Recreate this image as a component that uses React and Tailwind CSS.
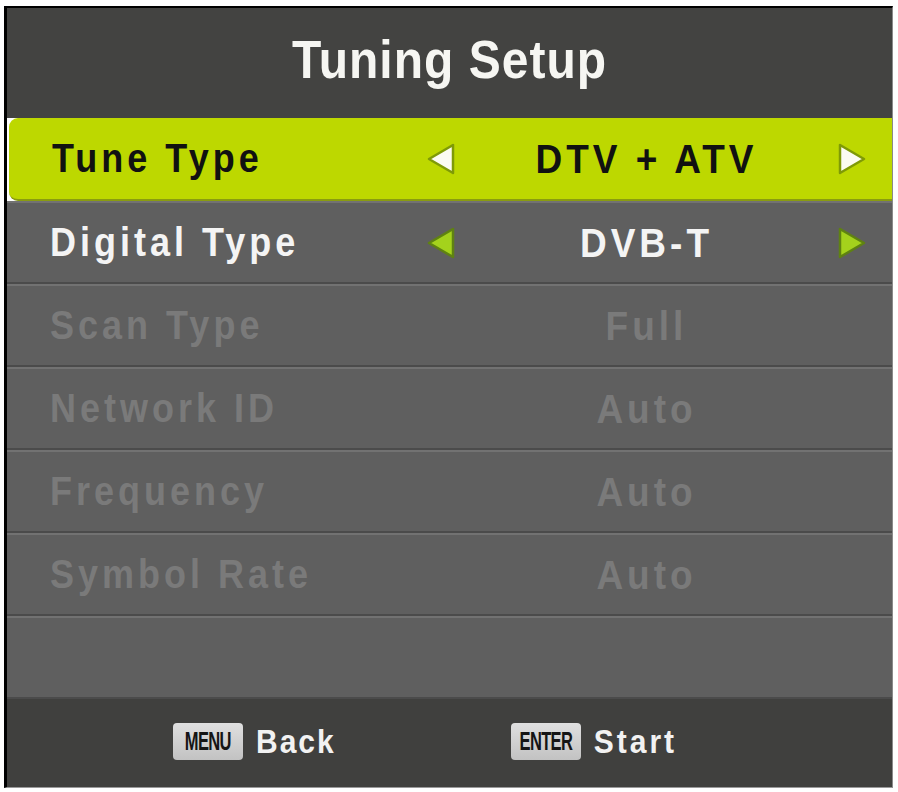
import React from 'react'

const font = { fontFamily: '"Liberation Sans", Arial, sans-serif' }

const rows = [
  { label: 'Tune Type', value: 'DTV + ATV', state: 'selected' },
  { label: 'Digital Type', value: 'DVB-T', state: 'active' },
  { label: 'Scan Type', value: 'Full', state: 'disabled' },
  { label: 'Network ID', value: 'Auto', state: 'disabled' },
  { label: 'Frequency', value: 'Auto', state: 'disabled' },
  { label: 'Symbol Rate', value: 'Auto', state: 'disabled' },
]

function Arrow({ dir, variant }) {
  const pts = dir === 'left' ? '2,16 26,2 26,30' : '26,16 2,2 2,30'
  const fill = variant === 'selected' ? '#fbfbf2' : '#a4d21c'
  const stroke = variant === 'selected' ? '#7f9a06' : '#5f8212'
  return (
    <svg width="28" height="32" viewBox="0 0 28 32" className="shrink-0">
      <polygon points={pts} fill={fill} stroke={stroke} strokeWidth="2.5" strokeLinejoin="round" />
    </svg>
  )
}

function Row({ label, value, state }) {
  const selected = state === 'selected'
  const disabled = state === 'disabled'
  const text = selected ? 'text-[#111]' : disabled ? 'text-[#7a7a7a]' : 'text-[#f4f4f4]'
  const bg = selected
    ? 'ml-[2px] bg-[#bdd800] rounded-l-[9px] border-b-2 border-b-[#8a9c10]'
    : 'bg-[#5f5f5f] border-t-2 border-t-[#727272] border-b-2 border-b-[#4b4b4b]'

  return (
    <div className={`flex items-center h-[83px] font-bold ${bg} ${text}`}>
      <div className={`${selected ? 'w-[418px]' : 'w-[420px]'} pl-[43px] text-[36px] tracking-[4px] leading-none`}>
        <span className="inline-block scale-y-[1.12]">{label}</span>
      </div>
      <div className="w-[28px] flex justify-center">
        {!disabled && <Arrow dir="left" variant={state} />}
      </div>
      <div className="flex-1 text-center text-[37px] tracking-[4px] leading-none">
        <span className="inline-block scale-y-[1.12]">{value}</span>
      </div>
      <div className="w-[28px] flex justify-center">
        {!disabled && <Arrow dir="right" variant={state} />}
      </div>
      <div className="w-[26px]" />
    </div>
  )
}

function KeyBadge({ children }) {
  return (
    <div className="w-[70px] h-[37px] rounded-[4px] bg-gradient-to-b from-[#e0e0e0] to-[#c2c2c2] flex items-center justify-center overflow-hidden">
      <span className="inline-block scale-x-[0.66] text-[25px] font-bold text-[#151515] tracking-[-1px] leading-none">
        {children}
      </span>
    </div>
  )
}

export default function App() {
  return (
    <div className="w-[898px] h-[792px] bg-white pt-[6px] pl-[4px]" style={font}>
      <div className="w-[889px] h-[782px] flex flex-col border-l-[3px] border-t-2 border-black border-r border-r-[#8a8a8a] border-b border-b-[#9a9a9a] overflow-hidden">
        {/* Title */}
        <div className="h-[110px] shrink-0 bg-[#434341] flex items-center justify-center pb-[6px]">
          <h1 className="text-[48px] font-bold text-[#f6f6f2] tracking-[1px] leading-none scale-y-[1.1]">Tuning Setup</h1>
        </div>

        {/* Settings list */}
        {rows.map((r) => (
          <Row key={r.label} {...r} />
        ))}
        <div className="h-[83px] bg-[#5f5f5f] border-t-2 border-t-[#727272] border-b-2 border-b-[#4b4b4b]" />

        {/* Footer hints */}
        <div className="flex-1 bg-[#40403e] flex items-center pl-[166px] pb-[3px]">
          <div className="flex items-center gap-[13px]">
            <KeyBadge>MENU</KeyBadge>
            <span className="text-[30px] font-bold text-[#f2f2f2] tracking-[2px] leading-none scale-y-[1.1]">Back</span>
          </div>
          <div className="flex items-center gap-[13px] ml-[175px]">
            <KeyBadge>ENTER</KeyBadge>
            <span className="text-[30px] font-bold text-[#f2f2f2] tracking-[3px] leading-none scale-y-[1.1]">Start</span>
          </div>
        </div>
      </div>
    </div>
  )
}
